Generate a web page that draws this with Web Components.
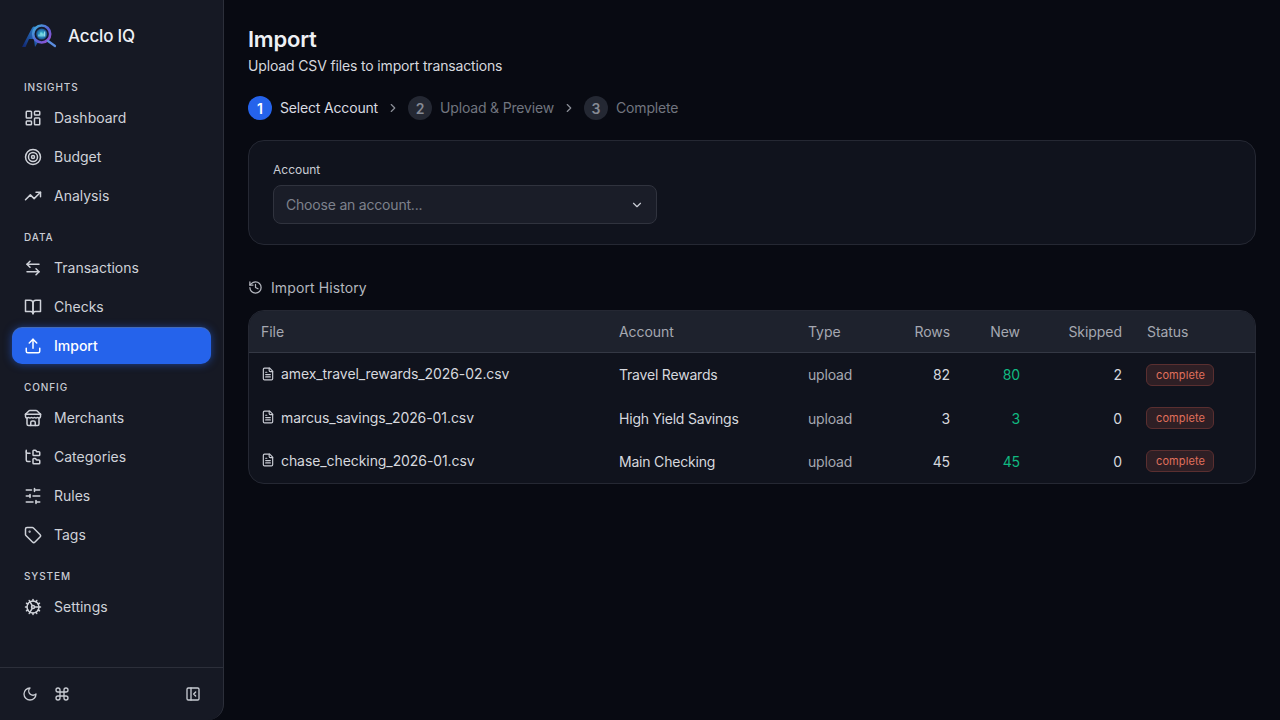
<!DOCTYPE html>
<html lang="en">
<head>
<meta charset="utf-8">
<title>Acclo IQ - Import</title>
<style>
html,body{margin:0;padding:0;height:720px;overflow:hidden;background:#080a12}
body{font-family:Inter,"Liberation Sans",sans-serif;color:#e4e6eb}
</style>
</head>
<body>
<app-shell>
  <app-sidebar slot="side">
    <nav-section label="INSIGHTS">
      <nav-item icon="dashboard">Dashboard</nav-item>
      <nav-item icon="target">Budget</nav-item>
      <nav-item icon="trend">Analysis</nav-item>
    </nav-section>
    <nav-section label="DATA">
      <nav-item icon="swap">Transactions</nav-item>
      <nav-item icon="book">Checks</nav-item>
      <nav-item icon="upload" active>Import</nav-item>
    </nav-section>
    <nav-section label="CONFIG">
      <nav-item icon="store">Merchants</nav-item>
      <nav-item icon="tree">Categories</nav-item>
      <nav-item icon="sliders">Rules</nav-item>
      <nav-item icon="tag">Tags</nav-item>
    </nav-section>
    <nav-section label="SYSTEM">
      <nav-item icon="cog">Settings</nav-item>
    </nav-section>
  </app-sidebar>
  <page-head title-text="Import">Upload CSV files to import transactions</page-head>
  <step-bar>
    <step-item n="1" active>Select Account</step-item>
    <app-icon name="chevron-right" size="14" style="color:#8b8f98"></app-icon>
    <step-item n="2">Upload &amp; Preview</step-item>
    <app-icon name="chevron-right" size="14" style="color:#8b8f98"></app-icon>
    <step-item n="3">Complete</step-item>
  </step-bar>
  <account-card></account-card>
  <history-title>Import History</history-title>
  <history-table>
    <history-row file="amex_travel_rewards_2026-02.csv" account="Travel Rewards" type="upload" rows="82" new="80" skipped="2"></history-row>
    <history-row file="marcus_savings_2026-01.csv" account="High Yield Savings" type="upload" rows="3" new="3" skipped="0"></history-row>
    <history-row file="chase_checking_2026-01.csv" account="Main Checking" type="upload" rows="45" new="45" skipped="0"></history-row>
  </history-table>
</app-shell>
<script>
const ICONS={
 dashboard:'<rect x="3" y="3" width="7" height="9" rx="1"/><rect x="14" y="3" width="7" height="5" rx="1"/><rect x="14" y="12" width="7" height="9" rx="1"/><rect x="3" y="16" width="7" height="5" rx="1"/>',
 target:'<circle cx="12" cy="12" r="10"/><circle cx="12" cy="12" r="6"/><circle cx="12" cy="12" r="2"/>',
 trend:'<polyline points="22 7 13.5 15.5 8.5 10.5 2 17"/><polyline points="16 7 22 7 22 13"/>',
 swap:'<path d="M8 3 4 7l4 4"/><path d="M4 7h16"/><path d="m16 21 4-4-4-4"/><path d="M20 17H4"/>',
 book:'<path d="M2 3h6a4 4 0 0 1 4 4v14a3 3 0 0 0-3-3H2z"/><path d="M22 3h-6a4 4 0 0 0-4 4v14a3 3 0 0 1 3-3h7z"/>',
 upload:'<path d="M21 15v4a2 2 0 0 1-2 2H5a2 2 0 0 1-2-2v-4"/><polyline points="17 8 12 3 7 8"/><line x1="12" y1="3" x2="12" y2="15"/>',
 store:'<path d="m2 7 4.41-4.41A2 2 0 0 1 7.83 2h8.34a2 2 0 0 1 1.42.59L22 7"/><path d="M4 12v8a2 2 0 0 0 2 2h12a2 2 0 0 0 2-2v-8"/><path d="M15 22v-4a2 2 0 0 0-2-2h-2a2 2 0 0 0-2 2v4"/><path d="M2 7h20"/><path d="M22 7v3a2 2 0 0 1-2 2a2.7 2.7 0 0 1-1.59-.63.7.7 0 0 0-.82 0A2.7 2.7 0 0 1 16 12a2.7 2.7 0 0 1-1.59-.63.7.7 0 0 0-.82 0A2.7 2.7 0 0 1 12 12a2.7 2.7 0 0 1-1.59-.63.7.7 0 0 0-.82 0A2.7 2.7 0 0 1 8 12a2.7 2.7 0 0 1-1.59-.63.7.7 0 0 0-.82 0A2.7 2.7 0 0 1 4 12a2 2 0 0 1-2-2V7"/>',
 tree:'<path d="M20 10a1 1 0 0 0 1-1V6a1 1 0 0 0-1-1h-2.5a1 1 0 0 1-.8-.4l-.9-1.2A1 1 0 0 0 15 3h-2a1 1 0 0 0-1 1v5a1 1 0 0 0 1 1Z"/><path d="M20 21a1 1 0 0 0 1-1v-3a1 1 0 0 0-1-1h-2.9a1 1 0 0 1-.88-.55l-.42-.85a1 1 0 0 0-.92-.6H13a1 1 0 0 0-1 1v5a1 1 0 0 0 1 1Z"/><path d="M3 5a2 2 0 0 0 2 2h3"/><path d="M3 3v13a2 2 0 0 0 2 2h3"/>',
 sliders:'<line x1="21" y1="4" x2="14" y2="4"/><line x1="10" y1="4" x2="3" y2="4"/><line x1="21" y1="12" x2="12" y2="12"/><line x1="8" y1="12" x2="3" y2="12"/><line x1="21" y1="20" x2="16" y2="20"/><line x1="12" y1="20" x2="3" y2="20"/><line x1="14" y1="2" x2="14" y2="6"/><line x1="8" y1="10" x2="8" y2="14"/><line x1="16" y1="18" x2="16" y2="22"/>',
 tag:'<path d="M12.586 2.586A2 2 0 0 0 11.172 2H4a2 2 0 0 0-2 2v7.172a2 2 0 0 0 .586 1.414l8.704 8.704a2.426 2.426 0 0 0 3.42 0l6.58-6.58a2.426 2.426 0 0 0 0-3.42z"/><circle cx="7.5" cy="7.5" r=".5" fill="currentColor"/>',
 cog:'<path d="M12 20a8 8 0 1 0 0-16 8 8 0 0 0 0 16Z"/><path d="M12 14a2 2 0 1 0 0-4 2 2 0 0 0 0 4Z"/><path d="M12 2v2"/><path d="M12 22v-2"/><path d="m17 20.66-1-1.73"/><path d="M11 10.27 7 3.34"/><path d="m20.66 17-1.73-1"/><path d="m3.34 7 1.73 1"/><path d="M14 12h8"/><path d="M2 12h2"/><path d="m20.66 7-1.73 1"/><path d="m3.34 17 1.73-1"/><path d="m17 3.34-1 1.73"/><path d="m11 13.73-4 6.93"/>',
 moon:'<path d="M12 3a6 6 0 0 0 9 9 9 9 0 1 1-9-9Z"/>',
 command:'<path d="M15 6v12a3 3 0 1 0 3-3H6a3 3 0 1 0 3 3V6a3 3 0 1 0-3 3h12a3 3 0 1 0-3-3"/>',
 panel:'<rect x="3" y="3" width="18" height="18" rx="2"/><path d="M9 3v18"/><path d="m16 15-3-3 3-3"/>',
 history:'<path d="M3 12a9 9 0 1 0 9-9 9.75 9.75 0 0 0-6.74 2.74L3 8"/><path d="M3 3v5h5"/><path d="M12 7v5l4 2"/>',
 file:'<path d="M15 2H6a2 2 0 0 0-2 2v16a2 2 0 0 0 2 2h12a2 2 0 0 0 2-2V7Z"/><path d="M14 2v4a2 2 0 0 0 2 2h4"/><path d="M10 9H8"/><path d="M16 13H8"/><path d="M16 17H8"/>',
 'chevron-right':'<path d="m9 18 6-6-6-6"/>',
 'chevron-down':'<path d="m6 9 6 6 6-6"/>'
};
function def(tag,html){
  customElements.define(tag,class extends HTMLElement{
    constructor(){super();this.attachShadow({mode:'open'});}
    connectedCallback(){
      this.shadowRoot.innerHTML=typeof html==='function'?html(this):html;
    }
  });
}
def('app-icon',el=>{
  const s=el.getAttribute('size')||18,w=el.getAttribute('stroke')||2;
  return `<style>:host{display:inline-flex;flex:none;width:${s}px;height:${s}px}svg{display:block}</style>
  <svg xmlns="http://www.w3.org/2000/svg" width="${s}" height="${s}" viewBox="0 0 24 24" fill="none" stroke="currentColor" stroke-width="${w}" stroke-linecap="round" stroke-linejoin="round">${ICONS[el.getAttribute('name')]||''}</svg>`;
});
def('app-shell',`<style>
:host{display:flex;width:1280px;height:720px;background:#080a12;overflow:hidden}
main{flex:1;min-width:0;padding:24px;box-sizing:border-box;display:flex;flex-direction:column}
</style><slot name="side"></slot><main><slot></slot></main>`);
def('brand-logo',`<style>:host{display:block;width:36px;height:36px;flex:none}svg{display:block}</style>
<svg xmlns="http://www.w3.org/2000/svg" width="36" height="36" viewBox="0 0 36 36" fill="none">
<defs>
<linearGradient id="a" x1="0" y1="1" x2="1" y2="0"><stop offset="0" stop-color="#10246e"/><stop offset="1" stop-color="#2f86d6"/></linearGradient>
<linearGradient id="q" x1="0" y1="0" x2="1" y2="1"><stop offset="0" stop-color="#3fb1d8"/><stop offset=".55" stop-color="#5a62d8"/><stop offset="1" stop-color="#a14fd0"/></linearGradient>
<radialGradient id="c"><stop offset="0" stop-color="#43d0d8"/><stop offset=".7" stop-color="#2377b0"/><stop offset="1" stop-color="#1a4a86"/></radialGradient>
</defs>
<path d="M0 29 L10 10 Q12.500 7 14 10.500 L15.500 25 L13 29 L11.800 21 L7 21 L3.500 29 Z" fill="url(#a)"/>
<circle cx="19.700" cy="16" r="8.500" fill="#141a2c" stroke="url(#q)" stroke-width="2.600"/>
<circle cx="19.700" cy="16" r="5.600" fill="url(#c)"/>
<path d="M17 18.500v-2M19 18.500v-4M21 18.500v-3M22.700 18.500v-5" stroke="#a8ecf0" stroke-width="1"/>
<path d="M26 23 L33 28" stroke="#5b8de0" stroke-width="2.200" stroke-linecap="round"/>
</svg>`);
def('app-sidebar',`<style>
:host{display:flex;flex-direction:column;width:224px;flex:none;height:720px;box-sizing:border-box;background:#161924;border-right:1px solid #2c2f3a;border-bottom-right-radius:16px;overflow:hidden}
header{display:flex;align-items:center;gap:10px;height:36px;padding:18px 0 0 22px;margin-bottom:25px}
.name{font-size:17px;font-weight:500;color:#eef0f4;line-height:28px;letter-spacing:-.17px}
nav{flex:1;padding:0 12px 0 12px;display:flex;flex-direction:column;gap:15px}
footer{height:52px;border-top:1px solid #2c2f3a;display:flex;align-items:center;padding:0 22px 0 22px;color:#c8cbd2;gap:16px}
.sp{flex:1}
</style>
<header><brand-logo></brand-logo><span class="name">Acclo IQ</span></header>
<nav><slot></slot></nav>
<footer><app-icon name="moon" size="16"></app-icon><app-icon name="command" size="16"></app-icon><span class="sp"></span><app-icon name="panel" size="16"></app-icon></footer>`);
def('nav-section',el=>`<style>
:host{display:block}
.l{font-size:10px;font-weight:500;letter-spacing:.9px;line-height:16px;height:16px;padding-left:12px;margin-bottom:5px;color:#c9ccd4}
.g{display:flex;flex-direction:column;gap:3px}
</style><div class="l">${el.getAttribute('label')}</div><div class="g"><slot></slot></div>`);
def('nav-item',el=>{
  const a=el.hasAttribute('active');
  return `<style>
:host{display:block}
.i{display:flex;align-items:center;gap:12px;height:36px;padding:0 12px;border-radius:10px;font-size:14px;line-height:20px;box-sizing:border-box;color:${a?'#fff':'#cfd2d9'};font-weight:${a?500:400};
${a?'background:#2563eb;box-shadow:0 -1px 0 rgba(96,150,245,.6),0 0 8px rgba(37,99,235,.6);':''}}
</style><div class="i"><app-icon name="${el.getAttribute('icon')}" size="18"></app-icon><span><slot></slot></span></div>`;
});
def('page-head',el=>`<style>
:host{display:block;margin-bottom:20px}
h1{margin:0;font-size:22px;line-height:30px;font-weight:600;color:#eef0f4;letter-spacing:-.22px}
p{margin:2px 0 0;font-size:14px;line-height:20px;color:#d6d8de;letter-spacing:-.15px}
</style><h1>${el.getAttribute('title-text')}</h1><p><slot></slot></p>`);
def('step-bar',`<style>:host{display:flex;align-items:center;gap:8px;height:24px;margin-bottom:20px}</style><slot></slot>`);
def('step-item',el=>{
  const a=el.hasAttribute('active');
  return `<style>
:host{display:flex;align-items:center;gap:8px}
.n{width:24px;height:24px;border-radius:50%;display:flex;align-items:center;justify-content:center;font-size:14px;font-weight:600;background:${a?'#2563eb':'#242833'};color:${a?'#fff':'#868a94'}}
.t{font-size:14px;line-height:20px;letter-spacing:-.17px;color:${a?'#d9dbe1':'#71757f'}}
</style><span class="n">${el.getAttribute('n')}</span><span class="t"><slot></slot></span>`;
});
def('account-card',`<style>
:host{display:block;box-sizing:border-box;height:105px;background:#10131d;border:1px solid #252833;border-radius:16px;padding:20px 24px;margin-bottom:31px}
label{display:block;font-size:12px;line-height:18px;font-weight:400;color:#c9ccd4;margin-bottom:6px}
.s{display:flex;align-items:center;justify-content:space-between;box-sizing:border-box;width:384px;height:39px;padding:0 12px;background:#1a1d28;border:1px solid #30333e;border-radius:8px;font-size:14px;letter-spacing:-.2px;color:#7d818c}
app-icon{color:#c9ccd4}
</style><label>Account</label><div class="s"><span>Choose an account...</span><app-icon name="chevron-down" size="14"></app-icon></div>`);
def('history-title',`<style>
:host{display:flex;align-items:center;gap:8px;height:22px;margin-bottom:12px;font-size:14px;font-weight:400;letter-spacing:.1px;color:#b4b7bf}
</style><app-icon name="history" size="15"></app-icon><span><slot></slot></span>`);
const COLS='grid-template-columns:358px 189px 90px 76px 70px 102px 1fr';
def('history-table',`<style>
:host{display:block;box-sizing:border-box;background:#10131d;border:1px solid #252833;border-radius:16px;overflow:hidden}
.h{display:grid;${COLS};align-items:center;height:42.4px;box-sizing:border-box;background:#1e222d;border-bottom:1px solid #343844;font-size:14px;letter-spacing:-.05px;font-weight:400;color:#a5a8b1}
.h span{padding:0 12px}
.h span:last-child{padding-left:13px}
.r{text-align:right}
</style><div class="h"><span>File</span><span>Account</span><span>Type</span><span class="r">Rows</span><span class="r">New</span><span class="r">Skipped</span><span>Status</span></div><slot></slot>`);
def('status-badge',`<style>
:host{display:inline-flex;align-items:center;box-sizing:border-box;height:22px;padding:0 8px 0 9px;border-radius:6px;background:#2e1f25;border:1px solid #5a2f30;color:#e0705c;font-size:11px;letter-spacing:.1px;font-weight:400}
</style><slot></slot>`);
def('history-row',el=>{
  const g=n=>el.getAttribute(n);
  return `<style>
:host{display:block}
.w{display:grid;${COLS};align-items:center;height:43.2px;font-size:14px;letter-spacing:-.2px;color:#d6d8de}
.w>span{padding:0 12px}
.f{display:flex;align-items:center;gap:6px;margin-top:-2px;letter-spacing:-.08px}
.f app-icon{color:#c9ccd4}
.a{color:#d6d8de}.t{color:#a5a8b1}
.r{text-align:right;letter-spacing:-.14px}.n{color:#10b981}
</style><div class="w"><span class="f"><app-icon name="file" size="14"></app-icon>${g('file')}</span><span class="a">${g('account')}</span><span class="t">${g('type')}</span><span class="r">${g('rows')}</span><span class="r n">${g('new')}</span><span class="r">${g('skipped')}</span><span><status-badge>complete</status-badge></span></div>`;
});
</script>
</body>
</html>
